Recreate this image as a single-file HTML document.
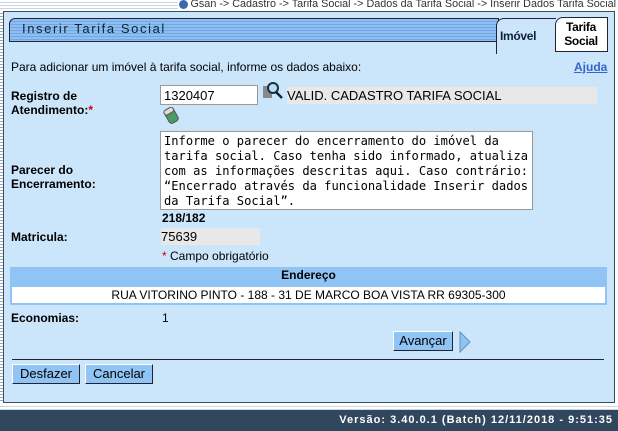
<!DOCTYPE html>
<html><head><meta charset="utf-8"><style>
*{margin:0;padding:0;box-sizing:border-box}
body{width:618px;height:431px;position:relative;background:#fff;font-family:"Liberation Sans",Arial,sans-serif;font-size:12px;color:#000;overflow:hidden}
.a{position:absolute}
.lbl{font-weight:bold}
.btn{position:absolute;background:#8fc4f5;border:1px solid #fff;border-right-color:#223;border-bottom-color:#223;font-size:13px;text-align:center;line-height:17px}
</style></head><body>
<div class="a" style="left:0;top:0;width:618px;height:10px;background:repeating-linear-gradient(#fff 0 2px,#c9d6e3 2px 3px)"></div>
<div class="a" style="left:178px;top:-2px;width:440px;height:12px;background:#fff"></div>
<div class="a" style="right:2px;top:-2px;font-size:10.8px;color:#333;white-space:nowrap">Gsan -&gt; Cadastro -&gt; Tarifa Social -&gt; Dados da Tarifa Social -&gt; Inserir Dados Tarifa Social</div>
<div class="a" style="left:179px;top:0;width:9px;height:9px;border-radius:50%;background:#3a6ab0"></div>
<div class="a" style="left:3px;top:11px;width:612px;height:392px;background:#cbe5fb;border:1px solid #3b4a5c"></div>
<div class="a" style="left:0;top:11px;width:3px;height:392px;background:repeating-linear-gradient(#fff 0 2px,#9ab 2px 3px)"></div>
<div class="a" style="left:9px;top:18px;width:490px;height:24px;border:1px solid #223;border-radius:6px 0 0 0;background:repeating-linear-gradient(#8fbff0 0 2px,#6ea6e6 2px 3px)"></div>
<div class="a" style="left:22px;top:21px;font-size:13px;letter-spacing:1.6px;color:#123">Inserir Tarifa Social</div>
<div class="a" style="left:496px;top:18px;width:60px;height:36px;background:#cbe5fb;border-left:1px solid #223;border-top:1px solid #223;border-radius:8px 0 0 0"></div>
<div class="a" style="left:500px;top:29px;font-size:12px;font-weight:bold;color:#123;letter-spacing:-0.3px">Imóvel</div>
<div class="a" style="left:555px;top:17px;width:53px;height:35px;background:#fff;border:1px solid #223;border-radius:8px 0 0 0"></div>
<div class="a" style="left:557px;top:20px;width:48px;text-align:center;font-size:12px;font-weight:bold;line-height:14px;letter-spacing:-0.3px">Tarifa<br>Social</div>
<div class="a" style="left:11px;top:60px">Para adicionar um imóvel à tarifa social, informe os dados abaixo:</div>
<div class="a" style="left:574px;top:60px;font-weight:bold;color:#3366cc;text-decoration:underline">Ajuda</div>
<div class="a lbl" style="left:11px;top:89px;line-height:14px">Registro de<br>Atendimento:<span style="color:#c00">*</span></div>
<div class="a" style="left:160px;top:85px;width:98px;height:20px;background:#fff;border:1px solid #999;padding:2px 3px;font-size:13px">1320407</div>
<div class="a" style="left:262px;top:81px;width:22px;height:20px"><svg width="22" height="20"><rect x="1" y="5" width="9" height="12" fill="#888"/><circle cx="11" cy="7" r="5" fill="#bde" stroke="#134" stroke-width="2"/><line x1="14" y1="11" x2="20" y2="17" stroke="#123" stroke-width="2.5"/></svg></div>
<div class="a" style="left:287px;top:87px;width:310px;height:17px;background:#e8e8e8;font-size:13px;line-height:17px">VALID. CADASTRO TARIFA SOCIAL</div>
<div class="a" style="left:163px;top:107px"><svg width="16" height="17"><g transform="rotate(-30 8 8)"><rect x="3" y="1" width="10" height="15" rx="3" fill="#4a9a66" stroke="#555"/><rect x="3" y="1" width="10" height="5" rx="2" fill="#ddd" stroke="#555"/></g></svg></div>
<div class="a lbl" style="left:11px;top:163px;line-height:14px">Parecer do<br>Encerramento:</div>
<div class="a" style="left:160px;top:131px;width:373px;height:79px;background:#fff;border:1px solid #999;padding:2px 3px;font-family:'DejaVu Sans Mono','Liberation Mono',monospace;font-size:12.1px;line-height:15px;white-space:pre;overflow:hidden">Informe o parecer do encerramento do imóvel da
tarifa social. Caso tenha sido informado, atualiza
com as informações descritas aqui. Caso contrário:
“Encerrado através da funcionalidade Inserir dados
da Tarifa Social”.</div>
<div class="a lbl" style="left:162px;top:211px">218/182</div>
<div class="a lbl" style="left:11px;top:230px">Matricula:</div>
<div class="a" style="left:161px;top:228px;width:99px;height:17px;background:#e8e8e8;font-size:13px;line-height:17px">75639</div>
<div class="a" style="left:162px;top:249px"><span style="color:#c00">*</span> Campo obrigatório</div>
<div class="a" style="left:10px;top:267px;width:597px;height:38px;background:#8fc4f5"></div>
<div class="a" style="left:10px;top:268px;width:597px;text-align:center;font-weight:bold;font-size:12px">Endereço</div>
<div class="a" style="left:12px;top:287px;width:593px;height:16px;background:#fff;text-align:center;line-height:16px">RUA VITORINO PINTO - 188 - 31 DE MARCO BOA VISTA RR 69305-300</div>
<div class="a lbl" style="left:11px;top:311px">Economias:</div>
<div class="a" style="left:162px;top:311px">1</div>
<div class="btn" style="left:393px;top:331px;width:60px;height:20px">Avançar</div>
<div class="a" style="left:458px;top:331px"><svg width="14" height="22"><path d="M2 1 L12 11 L2 21 Z" fill="#8fc4f5" stroke="#6a8fb0"/></svg></div>
<div class="a" style="left:12px;top:359px;width:592px;height:1px;background:#223"></div>
<div class="btn" style="left:12px;top:364px;width:68px;height:20px">Desfazer</div>
<div class="btn" style="left:85px;top:364px;width:68px;height:20px">Cancelar</div>
<div class="a" style="left:0;top:404px;width:618px;height:6px;background:repeating-linear-gradient(#fff 0 2px,#c9d6e3 2px 3px)"></div>
<div class="a" style="left:0;top:410px;width:618px;height:21px;background:#30475e"></div>
<div class="a" style="right:5px;top:414px;color:#fff;font-weight:bold;font-size:11px;letter-spacing:1px">Versão: 3.40.0.1 (Batch) 12/11/2018 - 9:51:35</div>
</body></html>
